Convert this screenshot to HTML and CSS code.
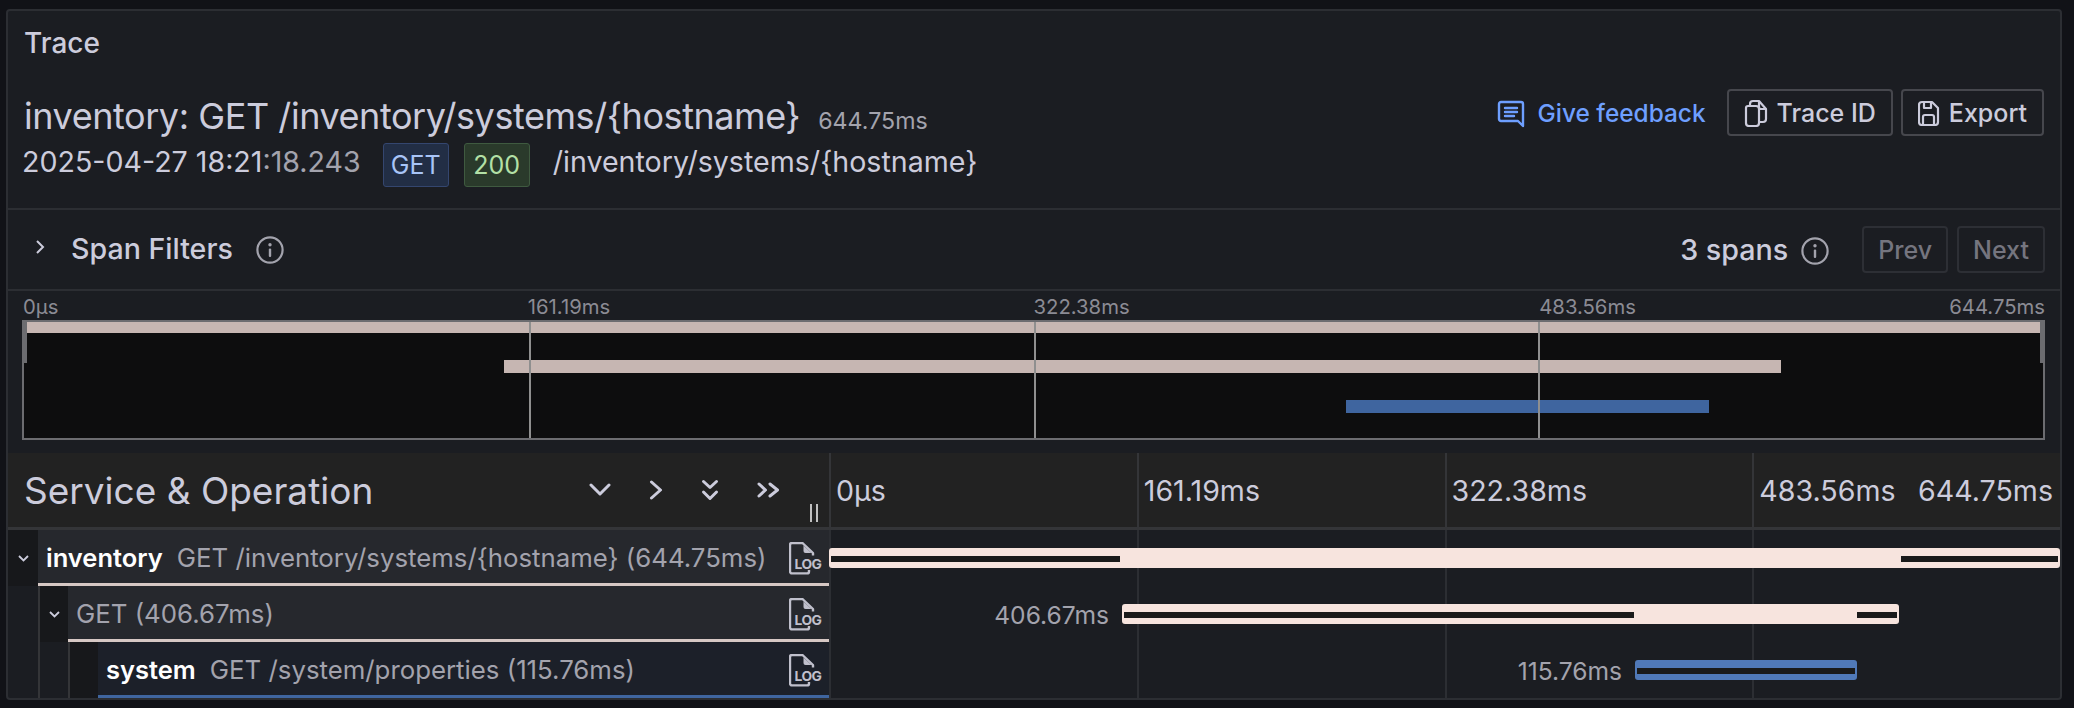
FILE: index.html
```html
<!DOCTYPE html>
<html lang="en">
<head>
    <meta charset="UTF-8">
    <meta name="viewport" content="width=device-width, initial-scale=1.0">
    <title>Trace</title>
    <link rel="stylesheet" href="styles.css">
</head>
<body>
    <div class="panel">
        <section class="trace-head">
            <h2 class="panel-title">Trace</h2>
            <div class="head-row">
                <div>
                    <div class="title-line">
                        <span class="trace-name">inventory: GET /inventory/systems/{hostname}</span>
                        <span class="trace-duration">644.75ms</span>
                    </div>
                    <div class="sub-line">
                        <span class="timestamp">2025-04-27 18:21<span class="dim">:18.243</span></span>
                        <span class="tag tag-blue">GET</span>
                        <span class="tag tag-green">200</span>
                        <span class="url">/inventory/systems/{hostname}</span>
                    </div>
                </div>
                <div class="actions">
                    <a class="feedback">
                        <svg width="28" height="28" viewBox="0 0 28 28" fill="none" stroke="currentColor" stroke-width="2.4" stroke-linejoin="round" stroke-linecap="round">
                            <path d="M4 2h20a2 2 0 0 1 2 2v22l-5-5H4a2 2 0 0 1-2-2V4a2 2 0 0 1 2-2z"/>
                            <path d="M8 8h12M8 12h12M8 16h9"/>
                        </svg>
                        Give feedback
                    </a>
                    <button class="btn">
                        <svg width="24" height="28" viewBox="0 0 24 28" fill="none" stroke="currentColor" stroke-width="2.2" stroke-linejoin="round">
                            <path d="M6 7V5a3 3 0 0 1 3-3h6l7 8v10a3 3 0 0 1-3 3h-4"/>
                            <path d="M4 7h8a3 3 0 0 1 3 3v14a3 3 0 0 1-3 3H5a3 3 0 0 1-3-3V9a2 2 0 0 1 2-2z"/>
                            <path d="M15 3v5a2 2 0 0 0 2 2h5"/>
                        </svg>
                        Trace ID
                    </button>
                    <button class="btn">
                        <svg width="22" height="26" viewBox="0 0 22 26" fill="none" stroke="currentColor" stroke-width="2.2" stroke-linejoin="round">
                            <path d="M4 2h10l6 6v14a3 3 0 0 1-3 3H4a3 3 0 0 1-3-3V5a3 3 0 0 1 3-3z"/>
                            <path d="M6 2v6h7V2M5 25v-8a2 2 0 0 1 2-2h7a2 2 0 0 1 2 2v8"/>
                        </svg>
                        Export
                    </button>
                </div>
            </div>
        </section>

        <section class="filters">
            <svg class="filter-chevron" width="11" height="16" viewBox="0 0 11 16" fill="none" stroke="currentColor" stroke-width="2"><path d="M2 2l6 6-6 6"/></svg>
            <span class="filter-label">Span Filters</span>
            <svg class="info-icon" width="28" height="28" viewBox="0 0 28 28">
                <circle cx="14" cy="14" r="12.6" fill="none" stroke="currentColor" stroke-width="2.2"/>
                <circle cx="14" cy="8.8" r="1.7" fill="currentColor"/>
                <rect x="12.8" y="12.4" width="2.4" height="8.6" rx="1.1" fill="currentColor"/>
            </svg>
            <div class="filter-right">
                <span class="span-count">3 spans</span>
                <svg class="info-icon" width="28" height="28" viewBox="0 0 28 28">
                    <circle cx="14" cy="14" r="12.6" fill="none" stroke="currentColor" stroke-width="2.2"/>
                    <circle cx="14" cy="8.8" r="1.7" fill="currentColor"/>
                    <rect x="12.8" y="12.4" width="2.4" height="8.6" rx="1.1" fill="currentColor"/>
                </svg>
                <button class="btn btn-off btn-prev">Prev</button>
                <button class="btn btn-off">Next</button>
            </div>
        </section>

        <section class="minimap">
            <div class="minimap-ticks">
                <span>0µs</span><span>161.19ms</span><span>322.38ms</span>
                <span class="minimap-last">483.56ms<b>644.75ms</b></span>
            </div>
            <div class="minimap-canvas">
                <i class="minimap-line" style="left:25%"></i>
                <i class="minimap-line" style="left:50%"></i>
                <i class="minimap-line" style="left:75%"></i>
                <i class="minimap-handle"></i>
                <i class="minimap-handle minimap-handle-right"></i>
                <i class="minimap-bar" style="left:0;width:100%;top:0;height:11px"></i>
                <i class="minimap-bar" style="left:23.75%;width:63.25%;top:38px;height:13px"></i>
                <i class="minimap-bar minimap-blue" style="left:65.5%;width:17.95%;top:78px;height:13px"></i>
            </div>
        </section>

        <section class="table-head">
            <div class="col-name">
                <span class="col-title">Service &amp; Operation</span>
                <div class="col-tools">
                    <svg width="22" height="14" viewBox="0 0 22 14" fill="none" stroke="currentColor" stroke-width="3" stroke-linecap="round" stroke-linejoin="round"><path d="M2 2l9 9 9-9"/></svg>
                    <svg width="14" height="20" viewBox="0 0 14 20" fill="none" stroke="currentColor" stroke-width="3" stroke-linecap="round" stroke-linejoin="round"><path d="M2.500 2l9 8-9 8"/></svg>
                    <svg width="18" height="22" viewBox="0 0 18 22" fill="none" stroke="currentColor" stroke-width="3" stroke-linecap="round" stroke-linejoin="round"><path d="M2.500 2.500l6.500 6 6.500-6M2.500 13l6.500 6.500 6.500-6.500"/></svg>
                    <svg width="23" height="16" viewBox="0 0 23 16" fill="none" stroke="currentColor" stroke-width="3" stroke-linecap="round" stroke-linejoin="round"><path d="M2 2l6.500 6-6.500 6M13 2l7.500 6-7.500 6"/></svg>
                </div>
                <i class="col-resizer"></i>
            </div>
            <div class="col-time">
                <span style="width:25%">0µs</span>
                <span style="width:25%">161.19ms</span>
                <span style="width:25%">322.38ms</span>
                <span class="col-time-last">483.56ms<b>644.75ms</b></span>
            </div>
        </section>

        <div class="row">
            <div class="row-name">
                <span class="indent indent-dark"><svg width="11" height="7" viewBox="0 0 11 7" fill="none" stroke="currentColor" stroke-width="1.800"><path d="M1 1l4.500 4.500L10 1"/></svg></span>
                <div class="label label-rose">
                    <b>inventory</b><span>GET /inventory/systems/{hostname} (644.75ms)</span>
                    <svg class="log-icon" width="33" height="33" viewBox="0 0 33 33">
                        <path d="M20 28v1.400a2 2 0 0 1-2 2H3a2 2 0 0 1-2-2V3a2 2 0 0 1 2-2h10.500L24 11v2.500" fill="none" stroke="currentColor" stroke-width="2.400" stroke-linejoin="round"/>
                        <path d="M14.500 3.500l8 7.500h-6a2 2 0 0 1-2-2z" fill="currentColor"/>
                        <text x="5.600" y="26.500" font-family="Inter, sans-serif" font-size="13.800" font-weight="700" letter-spacing="-.6" fill="currentColor">LOG</text>
                    </svg>
                </div>
            </div>
            <div class="row-time">
                <i style="left:0"></i><i style="left:25%"></i><i style="left:50%"></i><i style="left:75%"></i>
                <div class="bar" style="left:0;width:100%">
                    <i style="left:2px;width:289px"></i>
                    <i style="right:2px;width:157px"></i>
                </div>
            </div>
        </div>

        <div class="row">
            <div class="row-name">
                <span class="indent"></span>
                <span class="indent indent-dark indent-line"><svg width="11" height="7" viewBox="0 0 11 7" fill="none" stroke="currentColor" stroke-width="1.800"><path d="M1 1l4.500 4.500L10 1"/></svg></span>
                <div class="label label-rose">
                    <span>GET (406.67ms)</span>
                    <svg class="log-icon" width="33" height="33" viewBox="0 0 33 33">
                        <path d="M20 28v1.400a2 2 0 0 1-2 2H3a2 2 0 0 1-2-2V3a2 2 0 0 1 2-2h10.500L24 11v2.500" fill="none" stroke="currentColor" stroke-width="2.400" stroke-linejoin="round"/>
                        <path d="M14.500 3.500l8 7.500h-6a2 2 0 0 1-2-2z" fill="currentColor"/>
                        <text x="5.600" y="26.500" font-family="Inter, sans-serif" font-size="13.800" font-weight="700" letter-spacing="-.6" fill="currentColor">LOG</text>
                    </svg>
                </div>
            </div>
            <div class="row-time">
                <i style="left:0"></i><i style="left:25%"></i><i style="left:50%"></i><i style="left:75%"></i>
                <div class="bar" style="left:23.8%;width:63.1%">
                    <em>406.67ms</em>
                    <i style="left:2px;width:510px"></i>
                    <i style="right:2px;width:40px"></i>
                </div>
            </div>
        </div>

        <div class="row">
            <div class="row-name">
                <span class="indent"></span>
                <span class="indent indent-line"></span>
                <span class="indent indent-dark indent-line"></span>
                <div class="label label-blue">
                    <b>system</b><span>GET /system/properties (115.76ms)</span>
                    <svg class="log-icon" width="33" height="33" viewBox="0 0 33 33">
                        <path d="M20 28v1.400a2 2 0 0 1-2 2H3a2 2 0 0 1-2-2V3a2 2 0 0 1 2-2h10.500L24 11v2.500" fill="none" stroke="currentColor" stroke-width="2.400" stroke-linejoin="round"/>
                        <path d="M14.500 3.500l8 7.500h-6a2 2 0 0 1-2-2z" fill="currentColor"/>
                        <text x="5.600" y="26.500" font-family="Inter, sans-serif" font-size="13.800" font-weight="700" letter-spacing="-.6" fill="currentColor">LOG</text>
                    </svg>
                </div>
            </div>
            <div class="row-time">
                <i style="left:0"></i><i style="left:25%"></i><i style="left:50%"></i><i style="left:75%"></i>
                <div class="bar bar-blue" style="left:65.48%;width:18.03%">
                    <em>115.76ms</em>
                    <i style="left:2px;right:2px"></i>
                </div>
            </div>
        </div>
    </div>
</body>
</html>
```

FILE: styles.css
```css
* {
    box-sizing: border-box;
}
body {
    font-family: Inter, 'Noto Sans', sans-serif;
    margin: 0;
    height: 708px;
    overflow: hidden;
    background-color: #111217;
    color: #ccccdc;
}
.panel {
    margin: 9px 12px 0 6px;
    height: 691px;
    border: 2px solid #2c2e33;
    border-radius: 4px;
    background-color: #1b1d22;
    overflow: hidden;
}

/* header */
.trace-head {
    height: 197px;
    padding: 18px 16px 0 16px;
}
.panel-title {
    margin: 0;
    font-size: 28px;
    line-height: 28px;
    font-weight: 500;
}
.head-row {
    display: flex;
    justify-content: space-between;
    align-items: flex-start;
    margin-top: 37px;
}
.title-line {
    display: flex;
    align-items: baseline;
    height: 44px;
}
.trace-name {
    font-size: 36px;
    line-height: 44px;
    letter-spacing: -.44px;
}
.trace-duration {
    margin-left: 18px;
    font-size: 23.200px;
    color: #a3a3ad;
}
.sub-line {
    display: flex;
    align-items: center;
    margin-top: 5px;
    margin-left: -2px;
    font-size: 28.600px;
}
.timestamp {
    margin-top: -8px;
}
.dim {
    color: #a3a3ad;
}
.tag {
    display: block;
    width: 66px;
    height: 44px;
    line-height: 42px;
    margin-left: 22px;
    border: 1px solid;
    border-radius: 3px;
    text-align: center;
    font-size: 25px;
}
.tag + .tag {
    margin-left: 15px;
}
.tag-blue {
    background-color: #222e45;
    border-color: #34466f;
    color: #a8c4f7;
}
.tag-green {
    background-color: #2a3a2b;
    border-color: #3f5a40;
    color: #b3e0a6;
}
.url {
    margin-left: 23px;
    margin-top: -8px;
}
.actions {
    display: flex;
    align-items: center;
    margin-top: -5px;
}
.actions .btn {
    margin-left: 8px;
}
.feedback {
    display: flex;
    align-items: center;
    gap: 13px;
    margin-right: 13px;
    font-size: 24.400px;
    font-weight: 500;
    color: #6e9fff;
}
.feedback svg {
    margin-top: 2px;
}
.btn {
    display: flex;
    align-items: center;
    justify-content: center;
    gap: 9px;
    height: 47px;
    padding: 0 15px;
    margin-left: 9px;
    font-family: inherit;
    font-size: 25px;
    font-weight: 500;
    color: #ccccdc;
    background: none;
    border: 2px solid #46474d;
    border-radius: 4px;
}
.btn-off {
    padding: 0 14px;
    color: #75757f;
    border-color: #2d2f35;
}

/* span filters */
.filters {
    display: flex;
    align-items: center;
    height: 83px;
    padding: 0 15px 0 27px;
    border-top: 2px solid #2c2e33;
    border-bottom: 2px solid #2c2e33;
}
.filter-chevron {
    margin-top: -6px;
}
.filter-label {
    margin-left: 25px;
    margin-top: -2px;
    font-size: 28.600px;
    font-weight: 500;
}
.info-icon {
    margin-left: 23px;
    color: #a3a3ad;
}
.filter-right {
    display: flex;
    align-items: center;
    margin-left: auto;
}
.span-count {
    font-size: 28.700px;
    font-weight: 500;
}
.filter-right .info-icon {
    margin-left: 13px;
    margin-top: 3px;
}
.btn-off.btn-prev {
    margin-left: 33px;
}

/* minimap */
.minimap {
    height: 162px;
    padding: 0 15px 0 14px;
}
.minimap-ticks {
    display: flex;
    height: 29px;
    align-items: center;
    padding-top: 1px;
    font-size: 20.300px;
    color: #8b8b94;
}
.minimap-ticks span {
    flex: none;
    width: 25%;
}
.minimap-ticks span:first-child {
    padding-left: 1px;
}
.minimap-ticks .minimap-last {
    display: flex;
    justify-content: space-between;
}
.minimap-ticks b {
    font-weight: 400;
}
.minimap-canvas {
    position: relative;
    height: 120px;
    border: 2px solid #6c6c70;
    background-color: #0d0d0e;
}
.minimap-canvas i {
    position: absolute;
}
.minimap-line {
    top: 0;
    bottom: 0;
    width: 2px;
    background-color: #8f8f8f;
    z-index: 1;
}
.minimap-bar {
    background-color: #c6b6b2;
}
.minimap-blue {
    background-color: #3f659f;
}
.minimap-handle {
    left: -2px;
    top: 0;
    width: 5px;
    height: 41px;
    background-color: #6c6c70;
    z-index: 2;
}
.minimap-canvas .minimap-handle-right {
    left: auto;
    right: -2px;
}

/* table */
.table-head {
    display: flex;
    height: 77px;
    background-color: #222222;
    border-bottom: 3px solid #343538;
}
.col-name {
    position: relative;
    display: flex;
    align-items: center;
    flex: none;
    width: 821px;
    padding: 0 0 0 16px;
}
.col-title {
    font-size: 37px;
}
.col-tools {
    display: flex;
    align-items: center;
    margin-left: auto;
    margin-right: 49px;
    gap: 38px;
}
.col-resizer {
    position: absolute;
    right: 11px;
    bottom: 5px;
    width: 8px;
    height: 18px;
    border: solid #c0c0c0;
    border-width: 0 2px;
}
.col-time {
    display: flex;
    flex: 1;
    align-items: center;
    height: 100%;
}
.col-time span {
    display: flex;
    align-items: center;
    justify-content: space-between;
    height: 100%;
    padding-left: 5px;
    font-size: 28.600px;
    border-left: 2px solid #343538;
}
.col-time .col-time-last {
    flex: 1;
    padding-right: 7px;
}
.col-time b {
    font-weight: 400;
}
.row {
    display: flex;
    height: 56px;
}
.row-name {
    display: flex;
    flex: none;
    width: 821px;
}
.indent {
    display: flex;
    align-items: center;
    justify-content: center;
    flex: none;
    width: 30px;
    color: #ccccdc;
}
.indent-dark {
    background-color: #17181b;
}
.indent-line {
    border-left: 2px solid #343538;
}
.label {
    display: flex;
    align-items: center;
    flex: 1;
    min-width: 0;
    padding: 2px 7px 0 8px;
    font-size: 25.800px;
    color: #a3a3ad;
    border-bottom: 3px solid #d6c8c4;
    background-color: #26282d;
}
.label-blue {
    background-color: #1c2029;
    border-bottom-color: #3f659f;
}
.label b {
    margin-right: 14px;
    font-size: 25.500px;
    font-weight: 600;
    color: #fff;
}
.log-icon {
    flex: none;
    margin-left: auto;
    margin-top: 2px;
    color: #c0c0cc;
}
.row-time {
    position: relative;
    flex: 1;
}
.row-time > i {
    position: absolute;
    top: 0;
    bottom: 0;
    width: 2px;
    background-color: #2c2e33;
}
.bar {
    position: absolute;
    top: 18px;
    height: 20px;
    border-radius: 3px;
    background-color: #f7e4de;
}
.bar-blue {
    background-color: #5079b8;
}
.bar i {
    position: absolute;
    top: 8px;
    height: 6px;
    background-color: #1a1a1a;
}
.bar em {
    position: absolute;
    right: calc(100% + 13px);
    top: -3px;
    font-style: normal;
    font-size: 24.600px;
    line-height: 28px;
    color: #a3a3ad;
}
```
